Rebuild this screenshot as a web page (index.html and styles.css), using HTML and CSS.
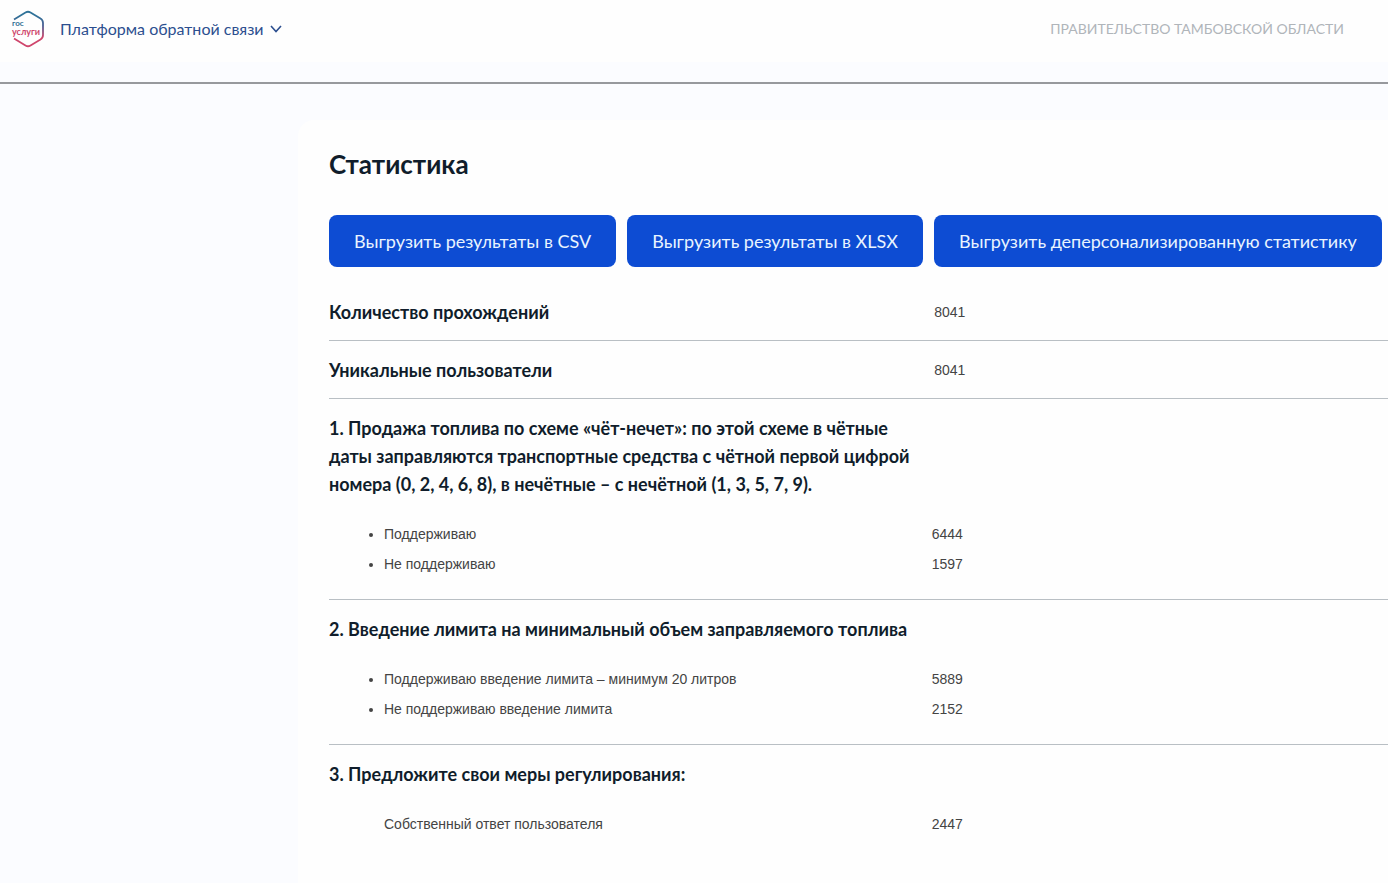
FILE: index.html
```html
<!DOCTYPE html>
<html lang="ru">
<head>
  <meta charset="UTF-8" />
  <meta name="viewport" content="width=device-width, initial-scale=1.0"/>
  <title>Статистика</title>
  <link rel="stylesheet" href="styles.css">
</head>
<body>
  <header class="header">
    <svg class="logo" width="34" height="38" viewBox="0 0 34 38" aria-label="Госуслуги">
      <defs>
        <linearGradient id="logoStroke" x1="0" y1="0" x2="0" y2="1">
          <stop offset="0.1" stop-color="#2f7298"/>
          <stop offset="0.4" stop-color="#4a5f93"/>
          <stop offset="0.75" stop-color="#cf466c"/>
        </linearGradient>
      </defs>
      <path d="M3 9.500 L14.500 2.500 Q17 1 19.500 2.500 L29.500 8.500 Q32 10 32 13 V25 Q32 28 29.500 29.500 L19.500 35.500 Q17 37 14.500 35.500 L3 28.500" fill="none" stroke="url(#logoStroke)" stroke-width="1.800"/>
      <text class="logo-top" x="1" y="16">гос</text>
      <text class="logo-bottom" x="1" y="25">услуги</text>
    </svg>
    <button class="platform" type="button">
      Платформа обратной связи
      <svg width="12" height="8" viewBox="0 0 12 8" aria-hidden="true">
        <path d="M1 1 L6 6.500 L11 1" fill="none" stroke="currentColor" stroke-width="1.600"/>
      </svg>
    </button>
    <span class="region">ПРАВИТЕЛЬСТВО ТАМБОВСКОЙ ОБЛАСТИ</span>
  </header>
  <div class="strip"></div>

  <div class="layout">
    <main class="card">
      <h1>Статистика</h1>
      <div class="actions">
        <button type="button">Выгрузить результаты в CSV</button>
        <button type="button">Выгрузить результаты в XLSX</button>
        <button type="button">Выгрузить деперсонализированную статистику</button>
      </div>

      <section class="row">
        <h2>Количество прохождений</h2>
        <span class="value">8041</span>
      </section>
      <section class="row">
        <h2>Уникальные пользователи</h2>
        <span class="value">8041</span>
      </section>

      <section class="row">
        <h2>1. Продажа топлива по схеме «чёт-нечет»: по этой схеме в чётные даты заправляются транспортные средства с чётной первой цифрой номера (0, 2, 4, 6, 8), в нечётные – с нечётной (1, 3, 5, 7, 9).</h2>
        <ul class="answers">
          <li><div class="answer"><span>Поддерживаю</span><span>6444</span></div></li>
          <li><div class="answer"><span>Не поддерживаю</span><span>1597</span></div></li>
        </ul>
      </section>

      <section class="row">
        <h2>2. Введение лимита на минимальный объем заправляемого топлива</h2>
        <ul class="answers">
          <li><div class="answer"><span>Поддерживаю введение лимита – минимум 20 литров</span><span>5889</span></div></li>
          <li><div class="answer"><span>Не поддерживаю введение лимита</span><span>2152</span></div></li>
        </ul>
      </section>

      <section class="row">
        <h2>3. Предложите свои меры регулирования:</h2>
        <ul class="answers plain">
          <li><div class="answer"><span>Собственный ответ пользователя</span><span>2447</span></div></li>
        </ul>
      </section>
    </main>
  </div>
</body>
</html>
```
FILE: styles.css
```css
:root {
  --accent: #0d4cd3;
  --bg: #fbfcff;
  --heading: #101d2b;
  --text: #444;
  --line: #b9bfc4;
}
* {
  box-sizing: border-box;
}
body {
  margin: 0;
  min-height: 100vh;
  display: flex;
  flex-direction: column;
  font-family: Lato, sans-serif;
  background-color: var(--bg);
  color: var(--heading);
}
button {
  font-family: inherit;
  border: none;
  cursor: pointer;
}

/* header */
.header {
  display: flex;
  align-items: center;
  height: 62px;
  padding: 0 44px 4px 11px;
  background-color: #fefefe;
}
.logo-top, .logo-bottom {
  font-weight: 700;
}
.logo-top {
  font-size: 8px;
  fill: #2f6f94;
}
.logo-bottom {
  font-size: 9px;
  fill: #cf466c;
}
.platform {
  display: flex;
  align-items: center;
  gap: 6px;
  margin-left: 15px;
  padding: 0;
  background: none;
  color: #2c4f8f;
  font-size: 16px;
  line-height: 24px;
}
.region {
  margin-left: auto;
  color: #b0b5ba;
  font-size: 14px;
  line-height: 24px;
}
.strip {
  height: 22px;
  border-bottom: 2px solid #97999d;
}

/* content */
.layout {
  flex: 1;
  display: flex;
  padding: 36px 0 0 298px;
}
.card {
  flex: 1;
  padding: 26px 0 0 31px;
  border-top-left-radius: 16px;
  background-color: #fefefe;
}
h1 {
  margin: 0 0 33px;
  font-size: 26px;
  line-height: 36px;
  font-weight: 700;
}
.actions {
  display: flex;
  gap: 11px;
  margin-bottom: 16px;
}
.actions button {
  height: 52px;
  padding: 0 25px;
  border-radius: 8px;
  background-color: var(--accent);
  color: #e9f4ff;
  font-size: 18px;
  white-space: nowrap;
}
.row {
  display: grid;
  grid-template-columns: 4fr 3fr;
  padding: 15px 0 14px;
  border-bottom: 1px solid var(--line);
}
.row:last-child {
  border-bottom: none;
}
h2 {
  margin: 0;
  padding-right: 16px;
  font-size: 18px;
  line-height: 28px;
  font-weight: 700;
}
.value, .answers {
  font-family: "Liberation Sans", Arial, sans-serif;
  font-size: 14px;
  color: var(--text);
}
.value {
  line-height: 28px;
}
.answers {
  grid-column: 1 / -1;
  margin: 21px 0 6px;
  padding-left: 55px;
  line-height: 30px;
}
.plain {
  list-style: none;
}
.answer {
  display: grid;
  grid-template-columns: 6fr 5fr;
}
```
